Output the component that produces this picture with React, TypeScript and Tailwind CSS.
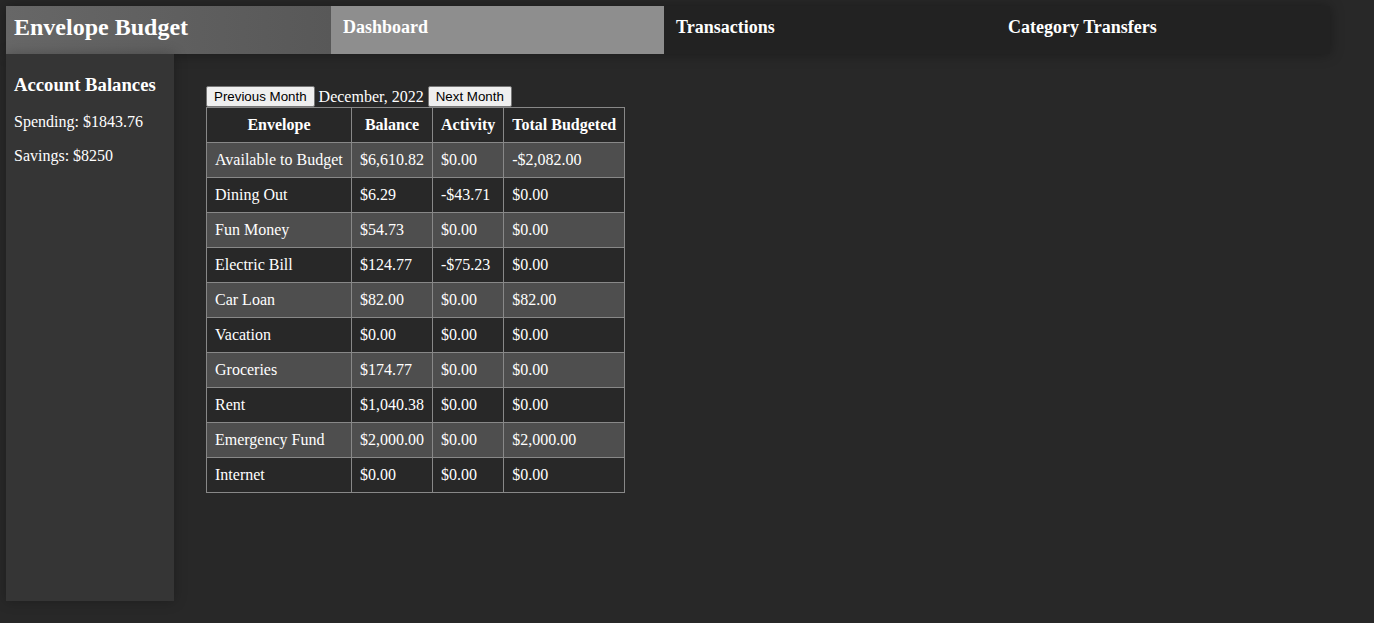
import React from 'react';

const rows = [
  ['Available to Budget', '$6,610.82', '$0.00', '-$2,082.00'],
  ['Dining Out', '$6.29', '-$43.71', '$0.00'],
  ['Fun Money', '$54.73', '$0.00', '$0.00'],
  ['Electric Bill', '$124.77', '-$75.23', '$0.00'],
  ['Car Loan', '$82.00', '$0.00', '$82.00'],
  ['Vacation', '$0.00', '$0.00', '$0.00'],
  ['Groceries', '$174.77', '$0.00', '$0.00'],
  ['Rent', '$1,040.38', '$0.00', '$0.00'],
  ['Emergency Fund', '$2,000.00', '$0.00', '$2,000.00'],
  ['Internet', '$0.00', '$0.00', '$0.00'],
];

export default function App() {
  return (
    <div className="min-h-[623px] bg-[#282828] p-[6px] text-white font-['Liberation_Serif',serif]">
      {/* top bar */}
      <header className="flex h-[48px] w-[1324px] bg-[#222] shadow-[0_0_12px_rgba(0,0,0,0.35)]">
        <div className="flex w-[325px] items-center bg-gradient-to-r from-[#676767] to-[#585858] px-2 pb-[6px]">
          <h1 className="text-[24px] font-bold">Envelope Budget</h1>
        </div>
        <nav className="flex flex-1">
          <a className="flex w-[333px] items-center bg-[#8e8e8e] px-3 pb-[6px] text-[18px] font-bold">Dashboard</a>
          <a className="flex w-[332px] items-center px-3 pb-[6px] text-[18px] font-bold">Transactions</a>
          <a className="flex flex-1 items-center px-3 pb-[6px] text-[18px] font-bold">Category Transfers</a>
        </nav>
      </header>

      <div className="flex">
        {/* sidebar */}
        <aside className="h-[547px] w-[168px] bg-[#353535] px-2 pt-[20px] shadow-[0_0_12px_rgba(0,0,0,0.25)]">
          <h3 className="text-[18.7px] font-bold leading-[22px]">Account Balances</h3>
          <p className="mt-[17px] text-[16px] leading-[18px]">Spending: $1843.76</p>
          <p className="mt-[16px] text-[16px] leading-[18px]">Savings: $8250</p>
        </aside>

        {/* main */}
        <main className="pl-[32px] pt-[32px]">
          <div className="flex items-end gap-[4px]">
            <button className="h-[21px] rounded-[2px] border border-[#767676] bg-[#efefef] px-[7px] text-[13.33px] leading-none text-black font-['Liberation_Sans',sans-serif]">
              Previous Month
            </button>
            <span className="text-[16px] leading-[20px]">December, 2022</span>
            <button className="h-[21px] rounded-[2px] border border-[#767676] bg-[#efefef] px-[7px] text-[13.33px] leading-none text-black font-['Liberation_Sans',sans-serif]">
              Next Month
            </button>
          </div>
          <table className="border-collapse text-[16px]">
            <thead>
              <tr className="h-[35px]">
                <th className="w-[145px] border border-[#888] px-2 text-center font-bold">Envelope</th>
                <th className="w-[81px] border border-[#888] px-2 text-center font-bold">Balance</th>
                <th className="w-[71px] border border-[#888] px-2 text-center font-bold">Activity</th>
                <th className="w-[121px] border border-[#888] px-2 text-center font-bold">Total Budgeted</th>
              </tr>
            </thead>
            <tbody>
              {rows.map((r, i) => (
                <tr key={r[0]} className={i % 2 === 0 ? 'h-[35px] bg-[#4e4e4e]' : 'h-[35px]'}>
                  {r.map((c, j) => (
                    <td key={j} className="whitespace-nowrap border border-[#888] px-2 text-left">
                      {c}
                    </td>
                  ))}
                </tr>
              ))}
            </tbody>
          </table>
        </main>
      </div>
    </div>
  );
}
